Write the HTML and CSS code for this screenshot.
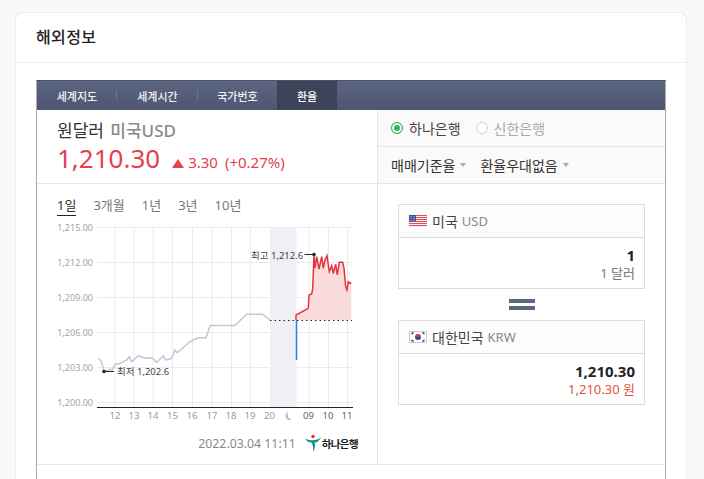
FILE: index.html
```html
<!DOCTYPE html>
<html lang="ko">
<head>
    <meta charset="UTF-8">
    <meta name="viewport" content="width=device-width, initial-scale=1.0">
    <title>해외정보</title>
    <link rel="stylesheet" href="styles.css">
</head>
<body>
    <div class="card">
        <h2 class="card-title">해외정보</h2>
        <div class="card-body">
            <div class="widget">
                <div class="tabs">
                    <a class="tab tab-map">세계지도</a>
                    <a class="tab tab-time">세계시간</a>
                    <a class="tab tab-code">국가번호</a>
                    <a class="tab tab-rate active">환율</a>
                </div>
                <div class="panel">
                    <div class="left">
                        <div class="summary">
                            <div class="pair">원달러 <span class="pair-sub">미국USD</span></div>
                            <div class="quote">
                                <span class="price">1,210.30</span>
                                <span class="arrow"></span>
                                <span class="change">3.30</span>
                                <span class="change">(+0.27%)</span>
                            </div>
                        </div>
                        <div class="chart-box">
                            <div class="periods">
                                <span class="period on">1일</span>
                                <span class="period">3개월</span>
                                <span class="period">1년</span>
                                <span class="period">3년</span>
                                <span class="period">10년</span>
                            </div>
                            <svg class="chart" width="340" height="205" viewBox="37 217 340 205">
                                <g class="grid">
                                    <path d="M97 227.500H353M97 262.500H353M97 297.500H353M97 332.500H353M97 367.500H353M97 402.500H353"/>
                                    <path d="M115 227V407M134 227V407M153 227V407M172.500 227V407M192.500 227V407M212 227V407M231.500 227V407M250.500 227V407M309 227V407M328.500 227V407M347.500 227V407"/>
                                </g>
                                <rect class="night" x="270" y="227" width="26.500" height="180"/>
                                <path class="area" d="M296 320V315L308.300 308.300 309 295 311.700 294 312.700 288.300 314 255 315 268 316.700 256.700 319 269 321.700 256.700 323.300 268.300 325 260 327 255.700 329.300 271.700 331.700 265.700 333.300 273.300 335.700 264.300 337.300 275 339.300 262.300 342.700 262.300 344 268.300 345.700 286.700 347 290 348.300 281.700 350 283.300 351.300 282.700V320Z"/>
                                <polyline class="line-prev" points="98.300,358.300 101,360.700 104.300,371.700 110,369.300 111.700,370 115.700,364 119,364 126.700,360 129.300,356.700 131.700,361.700 138.300,355.700 145,358.300 151.700,357.700 156.700,362.300 163.300,356 165.700,360 171.700,358.300 175,350 177.300,352.700 190,341.700 198.300,337.700 206,337.700 210,325.500 235,325.500 246.700,314.300 262.700,314.300 270,320"/>
                                <path class="line-base" d="M270 320.500H352"/>
                                <path class="line-open" d="M296.500 320V360"/>
                                <polyline class="line-now" points="296,320 296,315 308.300,308.300 309,295 311.700,294 312.700,288.300 314,255 315,268 316.700,256.700 319,269 321.700,256.700 323.300,268.300 325,260 327,255.700 329.300,271.700 331.700,265.700 333.300,273.300 335.700,264.300 337.300,275 339.300,262.300 342.700,262.300 344,268.300 345.700,286.700 347,290 348.300,281.700 350,283.300 351.300,282.700"/>
                                <path class="axis" d="M97 407.500H353"/>
                                <g class="y-labels">
                                    <text x="93" y="231">1,215.00</text>
                                    <text x="93" y="266">1,212.00</text>
                                    <text x="93" y="301">1,209.00</text>
                                    <text x="93" y="336">1,206.00</text>
                                    <text x="93" y="371">1,203.00</text>
                                    <text x="93" y="406">1,200.00</text>
                                </g>
                                <g class="x-labels">
                                    <text x="115" y="419">12</text>
                                    <text x="134" y="419">13</text>
                                    <text x="153" y="419">14</text>
                                    <text x="172.500" y="419">15</text>
                                    <text x="192" y="419">16</text>
                                    <text x="212" y="419">17</text>
                                    <text x="231" y="419">18</text>
                                    <text x="250" y="419">19</text>
                                    <text x="269.500" y="419">20</text>
                                    <text class="x-today" x="308.500" y="419">09</text>
                                    <text class="x-today" x="328" y="419">10</text>
                                    <text class="x-today" x="347" y="419">11</text>
                                </g>
                                <path class="moon" d="M288.500 412a4.200 4.200 0 1 0 3.500 7.500a4.800 4.800 0 0 1-3.500-7.500Z"/>
                                <path class="marker" d="M304.500 254.500H313"/>
                                <circle class="dot" cx="314" cy="254.500" r="1.800"/>
                                <text class="note" x="251" y="259">최고 1,212.6</text>
                                <path class="marker" d="M104 371.500H114"/>
                                <circle class="dot" cx="104" cy="371.500" r="1.800"/>
                                <text class="note" x="117" y="375">최저 1,202.6</text>
                            </svg>
                            <div class="chart-foot">
                                <span class="stamp">2022.03.04 11:11</span>
                                <span class="hana">
                                    <svg width="16" height="18" viewBox="0 0 16 18">
                                        <circle cx="8" cy="2.500" r="1.700" fill="#e5322d"/>
                                        <path d="M0 4.500C4 7 12 7 16 3.500C13 8.500 11 8.500 9.500 8.500C10.500 11 10 15 8 18C8.500 14 8 11 6.500 8.500C4 8.500 2 7.500 0 4.500Z" fill="#0d9488"/>
                                    </svg>
                                    하나은행
                                </span>
                            </div>
                        </div>
                    </div>
                    <div class="right">
                        <div class="banks">
                            <label class="bank"><span class="radio on"></span>하나은행</label>
                            <label class="bank off"><span class="radio"></span>신한은행</label>
                        </div>
                        <div class="options">
                            <span class="option">매매기준율</span>
                            <span class="option">환율우대없음</span>
                        </div>
                        <div class="convert">
                            <div class="money">
                                <div class="money-head">
                                    <svg class="flag" width="18" height="12" viewBox="0 0 18 12">
                                        <rect width="18" height="12" fill="#fbeeee"/>
                                        <path d="M0 .5H18M0 2.500H18M0 4.500H18M0 6.500H18M0 8.500H18M0 10.500H18" stroke="#d9525a" stroke-width="1.200"/>
                                        <rect width="7" height="6.500" fill="#3f5590"/>
                                        <path d="M1.500 1.500h1M4.500 1.500h1M1.500 3.500h1M4.500 3.500h1M1.500 5.500h1M4.500 5.500h1" stroke="#c9d2e8" stroke-width="1"/>
                                    </svg>
                                    <span class="nation">미국</span>
                                    <span class="code">USD</span>
                                </div>
                                <div class="money-body">
                                    <div class="amount">1</div>
                                    <div class="unit">1 달러</div>
                                </div>
                            </div>
                            <div class="equals"></div>
                            <div class="money">
                                <div class="money-head">
                                    <svg class="flag" width="18" height="12" viewBox="0 0 18 12">
                                        <rect x=".5" y=".5" width="17" height="11" fill="#fff" stroke="#ccc"/>
                                        <path d="M6 6a3 3 0 0 1 6 0Z" fill="#d9343f"/>
                                        <path d="M6 6a3 3 0 0 0 6 0Z" fill="#2b4a9b"/>
                                        <path d="M2.500 3l2 -1.500M2.500 9l2 1.500M15.500 3l-2 -1.500M15.500 9l-2 1.500" stroke="#222" stroke-width="1.300"/>
                                    </svg>
                                    <span class="nation">대한민국</span>
                                    <span class="code">KRW</span>
                                </div>
                                <div class="money-body">
                                    <div class="amount">1,210.30</div>
                                    <div class="unit unit-red">1,210.30 원</div>
                                </div>
                            </div>
                        </div>
                    </div>
                </div>
                <div class="widget-foot"></div>
            </div>
        </div>
    </div>
</body>
</html>
```

FILE: styles.css
```css
html, body {
    height: 100%;
    overflow: hidden;
}

body {
    margin: 0;
    padding: 12px 17px 0 15px;
    box-sizing: border-box;
    background-color: #f8f9fb;
    color: #222;
    font-family: "Noto Sans", "Noto Sans CJK KR", sans-serif;
}

.card {
    background-color: #fff;
    border: 1px solid #e9ecef;
    border-bottom: none;
    border-radius: 8px 8px 0 0;
}

.card-title {
    margin: 0;
    height: 49px;
    padding-left: 20px;
    border-bottom: 1px solid #eceef1;
    font-size: 16px;
    font-weight: 500;
    letter-spacing: .4px;
    line-height: 48px;
    color: #222;
}

.card-body {
    padding: 17px 20px 0;
}

.widget {
    border: 1px solid #a9acb2;
    border-top-color: #4a5069;
    border-bottom: none;
}

.tabs {
    display: flex;
    height: 29px;
    background: linear-gradient(#5c657f, #4e5672);
}

.tab {
    display: flex;
    align-items: center;
    justify-content: center;
    height: 29px;
    font-size: 11px;
    font-weight: 500;
    color: #f1f2f5;
    background-image: linear-gradient(#6d7489, #6d7489);
    background-size: 1px 11px;
    background-position: right center;
    background-repeat: no-repeat;
}

.tab-map { width: 80px; }
.tab-time { width: 81px; }
.tab-code { width: 79px; background-image: none; }
.tab-rate { width: 60px; background-image: none; }

.tab.active {
    background-color: #3d4359;
    color: #fff;
}

.panel {
    display: flex;
    border-bottom: 1px solid #e5e5e5;
}

.left {
    width: 340px;
    border-right: 1px solid #e5e5e5;
}

.summary {
    height: 74px;
    padding: 9px 0 0 20px;
    box-sizing: border-box;
    border-bottom: 1px solid #e5e5e5;
}

.pair {
    font-size: 17px;
    line-height: 24px;
    color: #333;
}

.pair-sub {
    margin-left: 2px;
    font-weight: 500;
    color: #8a8a8a;
}

.quote {
    display: flex;
    align-items: baseline;
    line-height: 30px;
    color: #e5404c;
}

.price {
    font-size: 26px;
    margin-right: 12px;
}

.arrow {
    width: 0;
    height: 0;
    margin-right: 4px;
    border-left: 6px solid transparent;
    border-right: 6px solid transparent;
    border-bottom: 9px solid #e5404c;
}

.change {
    font-size: 15px;
    margin-right: 7px;
}

.chart-box {
    height: 280px;
}

.periods {
    display: flex;
    gap: 17px;
    height: 33px;
    box-sizing: border-box;
    padding: 12px 0 0 20px;
    font-size: 13px;
    line-height: 19px;
    color: #777;
}

.period.on {
    align-self: flex-start;
    color: #333;
    border-bottom: 1px solid #222;
}

.chart {
    display: block;
}

.grid path {
    fill: none;
    stroke: #e9ebee;
    stroke-width: 1;
}

.night {
    fill: #eef0f5;
}

.area {
    fill: #fbdcdc;
}

.line-prev {
    fill: none;
    stroke: #c3c7d8;
    stroke-width: 1.500;
}

.line-now {
    fill: none;
    stroke: #e5343f;
    stroke-width: 1.500;
}

.line-open {
    stroke: #2f80d8;
    stroke-width: 1.500;
}

.line-base {
    stroke: #222;
    stroke-width: 1.200;
    stroke-dasharray: 1.500 3;
}

.axis {
    stroke: #222;
    stroke-width: 1;
}

.y-labels text {
    font-size: 9px;
    text-anchor: end;
    fill: #a3a3a3;
}

.x-labels text {
    font-size: 9.500px;
    text-anchor: middle;
    fill: #999;
}

.x-labels .x-today {
    fill: #666;
}

.moon {
    fill: #b9bdcc;
}

.marker {
    stroke: #222;
    stroke-width: 1;
}

.dot {
    fill: #222;
}

.note {
    font-size: 9.500px;
    fill: #444;
}

.chart-foot {
    display: flex;
    align-items: center;
    justify-content: flex-end;
    height: 42px;
    padding-right: 19px;
}

.stamp {
    font-size: 12.300px;
    color: #888;
    margin-right: 9px;
}

.hana {
    display: flex;
    align-items: center;
    gap: 1px;
    font-size: 10.500px;
    font-weight: 700;
    letter-spacing: -.6px;
    color: #222;
}

.right {
    flex: 1;
}

.banks {
    display: flex;
    align-items: center;
    gap: 15px;
    height: 36px;
    padding-left: 13px;
    background-color: #fafafa;
    border-bottom: 1px solid #e5e5e5;
}

.bank {
    display: flex;
    align-items: center;
    gap: 6px;
    font-size: 14px;
    color: #444;
}

.bank.off {
    color: #aaa;
}

.radio {
    width: 10px;
    height: 10px;
    border: 1px solid #d2d2d2;
    border-radius: 50%;
    background-color: #fff;
}

.radio.on {
    border-color: #2fb463;
    background-color: #2fb463;
    box-shadow: inset 0 0 0 2px #fff;
}

.options {
    display: flex;
    align-items: center;
    gap: 14px;
    height: 36px;
    padding-left: 13px;
    background-color: #fafafa;
    border-bottom: 1px solid #e5e5e5;
}

.option {
    display: flex;
    align-items: center;
    gap: 5px;
    font-size: 14px;
    color: #333;
}

.option::after {
    content: "";
    border-left: 3.500px solid transparent;
    border-right: 3.500px solid transparent;
    border-top: 4px solid #aaa;
}

.convert {
    padding: 20px 20px 0;
}

.money {
    border: 1px solid #dcdcdc;
}

.money-head {
    display: flex;
    align-items: center;
    height: 32px;
    padding-left: 10px;
    background-color: #fcfcfc;
    border-bottom: 1px solid #dcdcdc;
}

.flag {
    margin-right: 5px;
}

.nation {
    font-size: 14px;
    color: #444;
    margin-right: 4px;
}

.code {
    font-size: 13px;
    color: #888;
}

.money-body {
    height: 50px;
    padding: 8px 9px 0 0;
    box-sizing: border-box;
    text-align: right;
}

.amount {
    font-size: 15px;
    font-weight: 700;
    line-height: 18px;
    color: #222;
}

.unit {
    font-size: 13px;
    line-height: 18px;
    color: #777;
}

.unit-red {
    color: #e0533f;
}

.equals {
    width: 26px;
    height: 3px;
    margin: 10px auto;
    border-top: 4px solid #5e6780;
    border-bottom: 4px solid #5e6780;
}

.widget-foot {
    height: 14px;
}
```
